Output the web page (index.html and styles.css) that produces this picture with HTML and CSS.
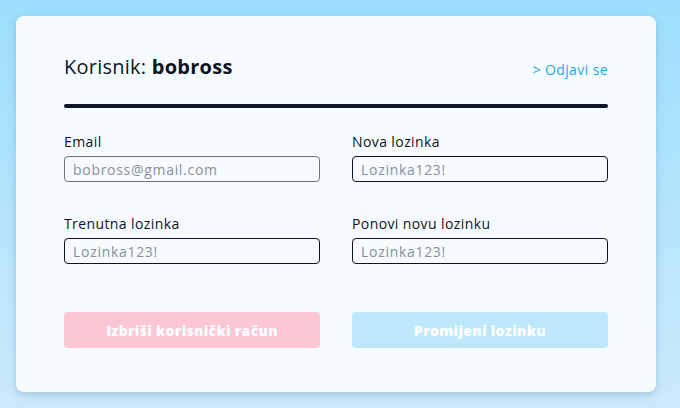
FILE: index.html
```html
<!DOCTYPE html>
<html lang="hr">
<head>
<meta charset="utf-8">
<title>Korisnik</title>
<link rel="stylesheet" href="styles.css">
</head>
<body>
<main class="card">
  <header class="head">
    <h1 class="title">Korisnik: <b>bobross</b></h1>
    <a class="logout" href="#">&gt; Odjavi se</a>
  </header>
  <hr class="rule">
  <form class="grid">
    <label class="field">
      <span class="label">Email</span>
      <input class="input disabled" type="text" placeholder="bobross@gmail.com" disabled>
    </label>
    <label class="field">
      <span class="label">Nova lozinka</span>
      <input class="input" type="text" placeholder="Lozinka123!">
    </label>
    <label class="field">
      <span class="label">Trenutna lozinka</span>
      <input class="input" type="text" placeholder="Lozinka123!">
    </label>
    <label class="field">
      <span class="label">Ponovi novu lozinku</span>
      <input class="input" type="text" placeholder="Lozinka123!">
    </label>
    <button class="btn danger" type="button">Izbriši korisnički račun</button>
    <button class="btn primary" type="button">Promijeni lozinku</button>
  </form>
</main>
</body>
</html>
```
FILE: styles.css
```css
* { box-sizing: border-box; }
html, body { height: 100%; }
body {
  margin: 0;
  padding: 16px 24px 16px 16px;
  background: linear-gradient(180deg, #9ddffe 0%, #cbebfc 100%);
  font-family: "Open Sans", "Noto Sans", sans-serif;
  color: #0f1424;
}
.card {
  width: 640px;
  height: 376px;
  background: #f5fbff;
  border-radius: 8px;
  padding: 30px 48px 0 48px;
  box-shadow: 0 3px 8px rgba(60, 100, 130, 0.25);
}
.head {
  display: flex;
  justify-content: space-between;
  align-items: flex-end;
  height: 40px;
}
.title {
  margin: 0;
  font-size: 20px;
  font-weight: 400;
  line-height: 30px;
  padding-bottom: 4px;
  letter-spacing: 0.25px;
}
.title b { font-weight: 700; }
.logout {
  color: #1aa9ec;
  text-decoration: none;
  font-size: 14px;
  line-height: 20px;
  padding-bottom: 6px;
  letter-spacing: 0.4px;
}
.rule {
  margin: 18px 0 0 0;
  border: 0;
  height: 4px;
  border-radius: 2px;
  background: #0f1729;
}
.grid {
  margin: 24px 0 0 0;
  display: grid;
  grid-template-columns: 1fr 1fr;
  column-gap: 32px;
  row-gap: 32px;
}
.field {
  display: flex;
  flex-direction: column;
  gap: 4px;
}
.label {
  font-size: 14px;
  line-height: 20px;
  letter-spacing: 0.4px;
}
.input {
  height: 26px;
  border: 1px solid #0f1424;
  border-radius: 4px;
  background: transparent;
  padding: 0 8px;
  font: inherit;
  font-size: 14px;
  letter-spacing: 0.7px;
  color: #0f1424;
}
.input::placeholder { color: #8a8f98; }
.input.disabled { border-color: #6f737b; }
.btn {
  margin-top: 16px;
  height: 36px;
  border: 0;
  border-radius: 4px;
  color: #fff;
  font: inherit;
  font-size: 14px;
  font-weight: 800;
  letter-spacing: 0.3px;
}
.danger { background: #fdc6d5; }
.primary { background: #bde8fc; }
```
